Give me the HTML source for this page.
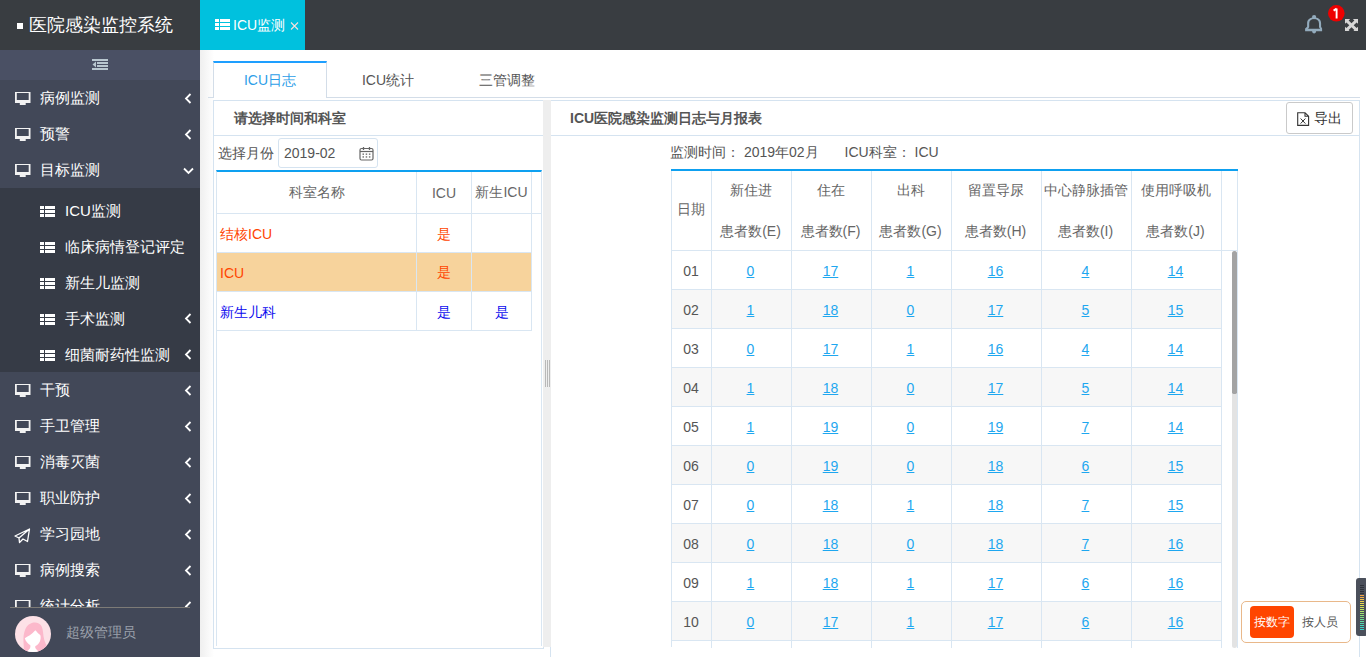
<!DOCTYPE html>
<html><head><meta charset="utf-8">
<style>
*{margin:0;padding:0;box-sizing:border-box}
html,body{width:1366px;height:657px;overflow:hidden;background:#fff;font-family:"Liberation Sans",sans-serif;font-size:14px;color:#555}
.abs{position:absolute}
#top{position:absolute;left:0;top:0;width:1366px;height:50px;background:#393d41}
#logo{position:absolute;left:17px;top:0;height:50px;line-height:50px;color:#fff;font-size:18px;white-space:nowrap}
#logo i{position:absolute;left:0;top:23px;width:6px;height:6px;background:#fff}
#logo span{position:absolute;left:12px;top:0}
#htab{position:absolute;left:200px;top:0;width:105px;height:50px;background:#00c1de;color:#fff;font-size:14px;line-height:50px;white-space:nowrap}
#side{position:absolute;left:0;top:50px;width:200px;height:607px;background:#424858;overflow:hidden}
#toggle{position:absolute;left:0;top:0;width:200px;height:30px;background:#4a5064}
.mi{position:absolute;left:0;width:200px;height:36px;line-height:36px;color:#fff;font-size:15px;white-space:nowrap}
.mi .t{position:absolute;left:40px;top:0}
.sub{position:absolute;left:0;width:200px;background:#363b46}
.si .t{left:65px;top:1px!important}
.chev{position:absolute;left:184px;top:0}
#user{position:absolute;left:0;top:557px;width:200px;height:50px;background:#424858}
#main{position:absolute;left:200px;top:50px;width:1166px;height:607px;background:#fff;overflow:hidden}
#shade{position:absolute;left:0;top:0;width:14px;height:607px;background:linear-gradient(to right,#efefef,#fff)}
.tabline{position:absolute;left:8px;top:47px;width:1152px;height:1px;background:#d3dde8}
.tab{position:absolute;top:11px;height:37px;line-height:38px;text-align:center;font-size:14px;color:#555;white-space:nowrap}
.tab.act{border:1px solid #d3dde8;border-top:2px solid #1e9fff;border-bottom:none;background:#fff;color:#2d9ee8;line-height:34px}
.panel{position:absolute;border:1px solid #d5e3f0;background:#fff}
.ph{position:absolute;left:0;top:0;right:0;height:35px;border-bottom:1px solid #d5e3f0;font-weight:bold;color:#555;line-height:34px;font-size:14px}
table{border-collapse:collapse;table-layout:fixed}
td,th{border:1px solid #d9e6f2;text-align:center;font-weight:normal;white-space:nowrap;overflow:hidden}
a{color:#1ea7f0;text-decoration:underline}
.hc{position:absolute;line-height:20px;text-align:center;font-size:14px;color:#666;white-space:nowrap}
.dc{position:absolute;height:38px;line-height:41px;text-align:center;font-size:14px;color:#555;z-index:2}
</style></head><body>
<div id="top">
  <div id="logo"><i></i><span>医院感染监控系统</span></div>
  <div id="htab"><svg width="15" height="11" viewBox="0 0 15 11" style="position:absolute;left:215px;top:19px;left:15px"><g fill="#fff"><rect x="0" y="0" width="4" height="3"/><rect x="5" y="0" width="10" height="3"/><rect x="0" y="4" width="4" height="3"/><rect x="5" y="4" width="10" height="3"/><rect x="0" y="8" width="4" height="3"/><rect x="5" y="8" width="10" height="3"/></g></svg><span style="position:absolute;left:33px;top:0">ICU监测</span><svg width="9" height="8" viewBox="0 0 9 8" style="position:absolute;left:90px;top:22px"><path d="M1 0.5L8 7.5M8 0.5L1 7.5" stroke="#f4e0dc" stroke-width="1.1"/></svg></div>
<svg width="24" height="24" viewBox="0 0 24 24" style="position:absolute;left:1302px;top:12px"><g fill="#93abbc"><path fill-rule="evenodd" d="M3.1 19.2 L3.1 16.6 L5.1 14.8 L5.1 11.5 C5.1 7.6 8 5.6 12.1 5.6 C16.2 5.6 19.1 7.6 19.1 11.5 L19.1 14.8 L20.1 16.6 L20.1 19.2 Z M7.2 15.2 L7.2 11.5 C7.2 8.9 9.2 7.1 12.1 7.1 C15 7.1 17 8.9 17 11.5 L17 15.2 L18.1 16.8 L6.1 16.8 Z"/><circle cx="12.1" cy="5.1" r="2.1"/><path d="M10.1 19 L14.1 19 C14.1 20.8 13.2 21.4 12.1 21.4 C11 21.4 10.1 20.8 10.1 19 Z"/></g></svg>
<svg width="17" height="17" viewBox="0 0 17 17" style="position:absolute;left:1327.7px;top:4.5px"><circle cx="8.3" cy="8.3" r="8.3" fill="#ee0000"/><path d="M8.6 3.4V13.4M8.6 3.6L5.6 5.6" stroke="#fff" stroke-width="1.9" fill="none"/></svg>
<svg width="13" height="12.5" viewBox="0 0 13 12.5" style="position:absolute;left:1344.6px;top:18.7px"><rect x="0" y="0" width="13" height="12.5" fill="#d6d6d6"/><path d="M5.1 0L3.65 1.4L6.5 4.2L9.35 1.4L7.9 0Z M5.1 12.5L3.65 11.1L6.5 8.3L9.35 11.1L7.9 12.5Z M0 4.8L1.4 3.4L4.3 6.25L1.4 9.1L0 7.7Z M13 4.8L11.6 3.4L8.7 6.25L11.6 9.1L13 7.7Z" fill="#393d41"/></svg>
</div>
<div id="side">
  <div id="toggle"><svg width="17" height="12" viewBox="0 0 17 12" style="position:absolute;left:92px;top:9px"><g fill="#b8c6cf"><rect x="0" y="0" width="16" height="2"/><rect x="5" y="3" width="11" height="2"/><rect x="5" y="6" width="11" height="2"/><rect x="0" y="9" width="16" height="2"/><path d="M0.5 5.5L4 2.5L4 8.5Z"/></g></svg></div>
<div class="mi" style="top:30px"><svg class="ic" width="16" height="14" viewBox="0 0 16 14" style="position:absolute;left:15px;top:12px"><path fill="#f2f2f2" fill-rule="evenodd" d="M0 0H15.5V11H0Z M1.8 1.1H13.7V7.9H1.8Z"/><rect x="4.8" y="11" width="5.9" height="2" fill="#f2f2f2"/></svg><span class="t">病例监测</span><svg width="8" height="11" viewBox="0 0 8 11" style="position:absolute;left:184px;top:13px"><path d="M6.5 1 L2 5.5 L6.5 10" fill="none" stroke="#fff" stroke-width="1.8"/></svg></div>
<div class="mi" style="top:66px"><svg class="ic" width="16" height="14" viewBox="0 0 16 14" style="position:absolute;left:15px;top:12px"><path fill="#f2f2f2" fill-rule="evenodd" d="M0 0H15.5V11H0Z M1.8 1.1H13.7V7.9H1.8Z"/><rect x="4.8" y="11" width="5.9" height="2" fill="#f2f2f2"/></svg><span class="t">预警</span><svg width="8" height="11" viewBox="0 0 8 11" style="position:absolute;left:184px;top:13px"><path d="M6.5 1 L2 5.5 L6.5 10" fill="none" stroke="#fff" stroke-width="1.8"/></svg></div>
<div class="mi" style="top:102px"><svg class="ic" width="16" height="14" viewBox="0 0 16 14" style="position:absolute;left:15px;top:12px"><path fill="#f2f2f2" fill-rule="evenodd" d="M0 0H15.5V11H0Z M1.8 1.1H13.7V7.9H1.8Z"/><rect x="4.8" y="11" width="5.9" height="2" fill="#f2f2f2"/></svg><span class="t">目标监测</span><svg width="12" height="8" viewBox="0 0 12 8" style="position:absolute;left:183px;top:15px"><path d="M1 1.5 L5.5 6 L10 1.5" fill="none" stroke="#fff" stroke-width="1.8"/></svg></div>
<div class="sub" style="top:138px;height:184px"><div class="mi si" style="top:4px"><svg width="15" height="12" viewBox="0 0 15 12" style="position:absolute;left:40px;top:14px"><g fill="#fff"><rect x="0" y="0" width="4" height="3"/><rect x="5" y="0" width="10" height="3"/><rect x="0" y="4" width="4" height="3"/><rect x="5" y="4" width="10" height="3"/><rect x="0" y="8" width="4" height="3"/><rect x="5" y="8" width="10" height="3"/></g></svg><span class="t">ICU监测</span></div><div class="mi si" style="top:40px"><svg width="15" height="12" viewBox="0 0 15 12" style="position:absolute;left:40px;top:14px"><g fill="#fff"><rect x="0" y="0" width="4" height="3"/><rect x="5" y="0" width="10" height="3"/><rect x="0" y="4" width="4" height="3"/><rect x="5" y="4" width="10" height="3"/><rect x="0" y="8" width="4" height="3"/><rect x="5" y="8" width="10" height="3"/></g></svg><span class="t">临床病情登记评定</span></div><div class="mi si" style="top:76px"><svg width="15" height="12" viewBox="0 0 15 12" style="position:absolute;left:40px;top:14px"><g fill="#fff"><rect x="0" y="0" width="4" height="3"/><rect x="5" y="0" width="10" height="3"/><rect x="0" y="4" width="4" height="3"/><rect x="5" y="4" width="10" height="3"/><rect x="0" y="8" width="4" height="3"/><rect x="5" y="8" width="10" height="3"/></g></svg><span class="t">新生儿监测</span></div><div class="mi si" style="top:112px"><svg width="15" height="12" viewBox="0 0 15 12" style="position:absolute;left:40px;top:14px"><g fill="#fff"><rect x="0" y="0" width="4" height="3"/><rect x="5" y="0" width="10" height="3"/><rect x="0" y="4" width="4" height="3"/><rect x="5" y="4" width="10" height="3"/><rect x="0" y="8" width="4" height="3"/><rect x="5" y="8" width="10" height="3"/></g></svg><span class="t">手术监测</span><svg width="8" height="11" viewBox="0 0 8 11" style="position:absolute;left:184px;top:13px"><path d="M6.5 1 L2 5.5 L6.5 10" fill="none" stroke="#fff" stroke-width="1.8"/></svg></div><div class="mi si" style="top:148px"><svg width="15" height="12" viewBox="0 0 15 12" style="position:absolute;left:40px;top:14px"><g fill="#fff"><rect x="0" y="0" width="4" height="3"/><rect x="5" y="0" width="10" height="3"/><rect x="0" y="4" width="4" height="3"/><rect x="5" y="4" width="10" height="3"/><rect x="0" y="8" width="4" height="3"/><rect x="5" y="8" width="10" height="3"/></g></svg><span class="t">细菌耐药性监测</span><svg width="8" height="11" viewBox="0 0 8 11" style="position:absolute;left:184px;top:13px"><path d="M6.5 1 L2 5.5 L6.5 10" fill="none" stroke="#fff" stroke-width="1.8"/></svg></div></div>
<div class="mi" style="top:322px"><svg class="ic" width="16" height="14" viewBox="0 0 16 14" style="position:absolute;left:15px;top:12px"><path fill="#f2f2f2" fill-rule="evenodd" d="M0 0H15.5V11H0Z M1.8 1.1H13.7V7.9H1.8Z"/><rect x="4.8" y="11" width="5.9" height="2" fill="#f2f2f2"/></svg><span class="t">干预</span><svg width="8" height="11" viewBox="0 0 8 11" style="position:absolute;left:184px;top:13px"><path d="M6.5 1 L2 5.5 L6.5 10" fill="none" stroke="#fff" stroke-width="1.8"/></svg></div>
<div class="mi" style="top:358px"><svg class="ic" width="16" height="14" viewBox="0 0 16 14" style="position:absolute;left:15px;top:12px"><path fill="#f2f2f2" fill-rule="evenodd" d="M0 0H15.5V11H0Z M1.8 1.1H13.7V7.9H1.8Z"/><rect x="4.8" y="11" width="5.9" height="2" fill="#f2f2f2"/></svg><span class="t">手卫管理</span><svg width="8" height="11" viewBox="0 0 8 11" style="position:absolute;left:184px;top:13px"><path d="M6.5 1 L2 5.5 L6.5 10" fill="none" stroke="#fff" stroke-width="1.8"/></svg></div>
<div class="mi" style="top:394px"><svg class="ic" width="16" height="14" viewBox="0 0 16 14" style="position:absolute;left:15px;top:12px"><path fill="#f2f2f2" fill-rule="evenodd" d="M0 0H15.5V11H0Z M1.8 1.1H13.7V7.9H1.8Z"/><rect x="4.8" y="11" width="5.9" height="2" fill="#f2f2f2"/></svg><span class="t">消毒灭菌</span><svg width="8" height="11" viewBox="0 0 8 11" style="position:absolute;left:184px;top:13px"><path d="M6.5 1 L2 5.5 L6.5 10" fill="none" stroke="#fff" stroke-width="1.8"/></svg></div>
<div class="mi" style="top:430px"><svg class="ic" width="16" height="14" viewBox="0 0 16 14" style="position:absolute;left:15px;top:12px"><path fill="#f2f2f2" fill-rule="evenodd" d="M0 0H15.5V11H0Z M1.8 1.1H13.7V7.9H1.8Z"/><rect x="4.8" y="11" width="5.9" height="2" fill="#f2f2f2"/></svg><span class="t">职业防护</span><svg width="8" height="11" viewBox="0 0 8 11" style="position:absolute;left:184px;top:13px"><path d="M6.5 1 L2 5.5 L6.5 10" fill="none" stroke="#fff" stroke-width="1.8"/></svg></div>
<div class="mi" style="top:466px"><svg width="17" height="16" viewBox="0 0 17 16" style="position:absolute;left:14px;top:12px"><path d="M1 8 L15.5 1 L13.5 13.5 L9 11 L5.5 14.5 L5 10 Z M5 10 L15.5 1" fill="none" stroke="#fff" stroke-width="1.3" stroke-linejoin="round"/></svg><span class="t">学习园地</span><svg width="8" height="11" viewBox="0 0 8 11" style="position:absolute;left:184px;top:13px"><path d="M6.5 1 L2 5.5 L6.5 10" fill="none" stroke="#fff" stroke-width="1.8"/></svg></div>
<div class="mi" style="top:502px"><svg class="ic" width="16" height="14" viewBox="0 0 16 14" style="position:absolute;left:15px;top:12px"><path fill="#f2f2f2" fill-rule="evenodd" d="M0 0H15.5V11H0Z M1.8 1.1H13.7V7.9H1.8Z"/><rect x="4.8" y="11" width="5.9" height="2" fill="#f2f2f2"/></svg><span class="t">病例搜索</span><svg width="8" height="11" viewBox="0 0 8 11" style="position:absolute;left:184px;top:13px"><path d="M6.5 1 L2 5.5 L6.5 10" fill="none" stroke="#fff" stroke-width="1.8"/></svg></div>
<div class="mi" style="top:538px"><svg class="ic" width="16" height="14" viewBox="0 0 16 14" style="position:absolute;left:15px;top:12px"><path fill="#f2f2f2" fill-rule="evenodd" d="M0 0H15.5V11H0Z M1.8 1.1H13.7V7.9H1.8Z"/><rect x="4.8" y="11" width="5.9" height="2" fill="#f2f2f2"/></svg><span class="t">统计分析</span><svg width="8" height="11" viewBox="0 0 8 11" style="position:absolute;left:184px;top:13px"><path d="M6.5 1 L2 5.5 L6.5 10" fill="none" stroke="#fff" stroke-width="1.8"/></svg></div>
<div id="user"><div style="position:absolute;left:10px;top:0;width:180px;height:1px;background:#7d7b77"></div>
<svg width="36" height="36" viewBox="0 0 36 36" style="position:absolute;left:15px;top:9px"><defs><clipPath id="cc"><circle cx="18" cy="18" r="18"/></clipPath></defs><g clip-path="url(#cc)"><rect width="36" height="36" fill="#fde1e7"/><path d="M9 36 C9 28 7.5 22 9.5 15.5 C11.5 9 15.5 6.5 20 6.5 C25 6.5 27.5 10 28 16 C28.5 22 29.5 27 33 31.5 L30 36 Z" fill="#fcb8cb"/><path d="M9.8 22.3 C12.5 20.5 17 18.5 20.3 14.3 L21.6 15.6 C22.5 17 24 18 25.5 19.5 C26.2 24 24.5 28 20.5 30 C19.5 31.5 21 34 25 36 L11 36 C14.5 34 16 31.5 15.3 29.3 C12.5 27.5 10.5 25 9.8 22.3 Z" fill="#fff"/></g></svg>
<span style="position:absolute;left:66px;top:0;line-height:50px;font-size:14px;color:#9aa0ab">超级管理员</span></div>
</div>
<div id="main">
  <div id="shade"></div>
<div class="tabline"></div>
<div class="tab act" style="left:13px;width:114px">ICU日志</div>
<div class="tab" style="left:131px;width:114px">ICU统计</div>
<div class="tab" style="left:250px;width:114px">三管调整</div>
<div class="panel" id="lp" style="left:13px;top:50px;width:331px;height:549px">
  <div class="ph" style="padding-left:20px">请选择时间和科室</div>
  <span style="position:absolute;left:4px;top:35px;line-height:34px;font-size:14px;color:#555">选择月份</span>
  <div style="position:absolute;left:64px;top:37px;width:100px;height:30px;border:1px solid #d5e3f0;border-radius:3px;line-height:28px;padding-left:5px;color:#555;font-size:14px">2019-02<span style="position:absolute;left:80px;top:7px;line-height:0"><svg width="15" height="15" viewBox="0 0 15 15"><rect x="1" y="2.5" width="13" height="11.5" rx="1.5" fill="none" stroke="#666" stroke-width="1.2"/><path d="M1 5.5H14" stroke="#666" stroke-width="1.2"/><path d="M4.5 1V4M10.5 1V4" stroke="#666" stroke-width="1.3"/><g fill="#666"><rect x="3.5" y="7.5" width="1.5" height="1.3"/><rect x="6.7" y="7.5" width="1.5" height="1.3"/><rect x="9.9" y="7.5" width="1.5" height="1.3"/><rect x="3.5" y="10.3" width="1.5" height="1.3"/><rect x="6.7" y="10.3" width="1.5" height="1.3"/><rect x="9.9" y="10.3" width="1.5" height="1.3"/></g></svg></span></div>
  <div id="ltw" style="position:absolute;left:2px;top:69px;width:326px;height:476px;border:1px solid #d9e6f2;border-top:2px solid #0ea0f0;border-bottom:none;overflow:hidden">
<table style="position:absolute;left:-1px;top:-1px;width:326px">
<colgroup><col style="width:200px"><col style="width:55px"><col style="width:60px"><col style="width:11px"></colgroup>
<tr style="height:42px"><td style="color:#666">科室名称</td><td style="color:#666">ICU</td><td style="color:#666">新生ICU</td><td style="border-right:none"></td></tr>
</table>
<table style="position:absolute;left:-1px;top:40px;width:316px">
<colgroup><col style="width:200px"><col style="width:55px"><col style="width:60px"></colgroup>
<tr style="height:40px;color:#ff4500"><td style="text-align:left;padding-left:3px;border-top:none;padding-top:6px">结核ICU</td><td style="border-top:none;padding-top:6px">是</td><td style="border-top:none"></td></tr>
<tr style="height:39px;color:#ff4500;background:#f7d39c"><td style="text-align:left;padding-left:3px;padding-top:3px">ICU</td><td style="padding-top:3px">是</td><td></td></tr>
<tr style="height:39px;color:#0a0aee"><td style="text-align:left;padding-left:3px;padding-top:5px">新生儿科</td><td style="padding-top:5px">是</td><td style="padding-top:5px">是</td></tr>
</table>
</div>
</div>
<div style="position:absolute;left:343px;top:50px;width:8px;height:547px;background:#eeeeee;z-index:5"><div style="position:absolute;left:2px;top:260px;width:1px;height:27px;background:#b8b8b8"></div><div style="position:absolute;left:4px;top:260px;width:1px;height:27px;background:#b8b8b8"></div><div style="position:absolute;left:6px;top:260px;width:1px;height:27px;background:#b8b8b8"></div></div>
<div class="panel" id="rp" style="left:350px;top:50px;width:810px;height:600px;border-bottom:none">
  <div class="ph" style="padding-left:19px">ICU医院感染监测日志与月报表</div><div style="position:absolute;left:735px;top:1px;width:67px;height:32px;border:1px solid #cacaca;border-radius:3px;font-size:14px;color:#333;line-height:30px"><span style="position:absolute;left:10px;top:9px;line-height:0"><svg width="13" height="15" viewBox="0 0 13 15"><path d="M0.7 0.7H8L11.6 4.3V13.4H0.7Z M8 0.7V4.3H11.6" fill="none" stroke="#333" stroke-width="1.1"/><path d="M3.6 6.5L8.4 11.6M8.4 6.5L3.6 11.6" stroke="#333" stroke-width="1"/></svg></span><span style="position:absolute;left:27px;top:0">导出</span></div><div style="position:absolute;left:119px;top:41px;line-height:20px;font-size:14px;color:#555;white-space:nowrap">监测时间：&nbsp;2019年02月<span style="margin-left:26px">ICU科室：&nbsp;ICU</span></div><div id="rtw" style="position:absolute;left:120px;top:68px;width:567px;height:479px;border-top:2px solid #0ea0f0;overflow:hidden"><div style="position:absolute;left:0;top:0;width:1px;height:476px;background:#d9e6f2"></div><div style="position:absolute;left:566px;top:0;width:1px;height:477px;background:#d9e6f2;z-index:3"></div><div style="position:absolute;left:0;top:79px;width:567px;height:1px;background:#d9e6f2"></div><div class="hc" style="left:0;width:40px;top:28px">日期</div><div class="hc" style="left:40px;width:79px;top:9px">新住进</div><div class="hc" style="left:40px;width:79px;top:50px">患者数(E)</div><div style="position:absolute;left:40px;top:0;width:1px;height:477px;background:#d9e6f2;z-index:3"></div><div class="hc" style="left:120px;width:79px;top:9px">住在</div><div class="hc" style="left:120px;width:79px;top:50px">患者数(F)</div><div style="position:absolute;left:120px;top:0;width:1px;height:477px;background:#d9e6f2;z-index:3"></div><div class="hc" style="left:200px;width:79px;top:9px">出科</div><div class="hc" style="left:200px;width:79px;top:50px">患者数(G)</div><div style="position:absolute;left:200px;top:0;width:1px;height:477px;background:#d9e6f2;z-index:3"></div><div class="hc" style="left:280px;width:89px;top:9px">留置导尿</div><div class="hc" style="left:280px;width:89px;top:50px">患者数(H)</div><div style="position:absolute;left:280px;top:0;width:1px;height:477px;background:#d9e6f2;z-index:3"></div><div class="hc" style="left:370px;width:89px;top:9px">中心静脉插管</div><div class="hc" style="left:370px;width:89px;top:50px">患者数(I)</div><div style="position:absolute;left:370px;top:0;width:1px;height:477px;background:#d9e6f2;z-index:3"></div><div class="hc" style="left:460px;width:89px;top:9px">使用呼吸机</div><div class="hc" style="left:460px;width:89px;top:50px">患者数(J)</div><div style="position:absolute;left:460px;top:0;width:1px;height:477px;background:#d9e6f2;z-index:3"></div><div style="position:absolute;left:550px;top:0;width:1px;height:477px;background:#d9e6f2;z-index:3"></div><div style="position:absolute;left:1px;top:80px;width:550px;height:38px;background:#fff"></div><div style="position:absolute;left:0;top:118px;width:551px;height:1px;background:#d9e6f2"></div><div class="dc" style="left:0;width:40px;top:80px">01</div><div class="dc" style="left:40px;width:79px;top:80px"><a>0</a></div><div class="dc" style="left:120px;width:79px;top:80px"><a>17</a></div><div class="dc" style="left:200px;width:79px;top:80px"><a>1</a></div><div class="dc" style="left:280px;width:89px;top:80px"><a>16</a></div><div class="dc" style="left:370px;width:89px;top:80px"><a>4</a></div><div class="dc" style="left:460px;width:89px;top:80px"><a>14</a></div><div style="position:absolute;left:1px;top:119px;width:550px;height:38px;background:#f7f7f7"></div><div style="position:absolute;left:0;top:157px;width:551px;height:1px;background:#d9e6f2"></div><div class="dc" style="left:0;width:40px;top:119px">02</div><div class="dc" style="left:40px;width:79px;top:119px"><a>1</a></div><div class="dc" style="left:120px;width:79px;top:119px"><a>18</a></div><div class="dc" style="left:200px;width:79px;top:119px"><a>0</a></div><div class="dc" style="left:280px;width:89px;top:119px"><a>17</a></div><div class="dc" style="left:370px;width:89px;top:119px"><a>5</a></div><div class="dc" style="left:460px;width:89px;top:119px"><a>15</a></div><div style="position:absolute;left:1px;top:158px;width:550px;height:38px;background:#fff"></div><div style="position:absolute;left:0;top:196px;width:551px;height:1px;background:#d9e6f2"></div><div class="dc" style="left:0;width:40px;top:158px">03</div><div class="dc" style="left:40px;width:79px;top:158px"><a>0</a></div><div class="dc" style="left:120px;width:79px;top:158px"><a>17</a></div><div class="dc" style="left:200px;width:79px;top:158px"><a>1</a></div><div class="dc" style="left:280px;width:89px;top:158px"><a>16</a></div><div class="dc" style="left:370px;width:89px;top:158px"><a>4</a></div><div class="dc" style="left:460px;width:89px;top:158px"><a>14</a></div><div style="position:absolute;left:1px;top:197px;width:550px;height:38px;background:#f7f7f7"></div><div style="position:absolute;left:0;top:235px;width:551px;height:1px;background:#d9e6f2"></div><div class="dc" style="left:0;width:40px;top:197px">04</div><div class="dc" style="left:40px;width:79px;top:197px"><a>1</a></div><div class="dc" style="left:120px;width:79px;top:197px"><a>18</a></div><div class="dc" style="left:200px;width:79px;top:197px"><a>0</a></div><div class="dc" style="left:280px;width:89px;top:197px"><a>17</a></div><div class="dc" style="left:370px;width:89px;top:197px"><a>5</a></div><div class="dc" style="left:460px;width:89px;top:197px"><a>14</a></div><div style="position:absolute;left:1px;top:236px;width:550px;height:38px;background:#fff"></div><div style="position:absolute;left:0;top:274px;width:551px;height:1px;background:#d9e6f2"></div><div class="dc" style="left:0;width:40px;top:236px">05</div><div class="dc" style="left:40px;width:79px;top:236px"><a>1</a></div><div class="dc" style="left:120px;width:79px;top:236px"><a>19</a></div><div class="dc" style="left:200px;width:79px;top:236px"><a>0</a></div><div class="dc" style="left:280px;width:89px;top:236px"><a>19</a></div><div class="dc" style="left:370px;width:89px;top:236px"><a>7</a></div><div class="dc" style="left:460px;width:89px;top:236px"><a>14</a></div><div style="position:absolute;left:1px;top:275px;width:550px;height:38px;background:#f7f7f7"></div><div style="position:absolute;left:0;top:313px;width:551px;height:1px;background:#d9e6f2"></div><div class="dc" style="left:0;width:40px;top:275px">06</div><div class="dc" style="left:40px;width:79px;top:275px"><a>0</a></div><div class="dc" style="left:120px;width:79px;top:275px"><a>19</a></div><div class="dc" style="left:200px;width:79px;top:275px"><a>0</a></div><div class="dc" style="left:280px;width:89px;top:275px"><a>18</a></div><div class="dc" style="left:370px;width:89px;top:275px"><a>6</a></div><div class="dc" style="left:460px;width:89px;top:275px"><a>15</a></div><div style="position:absolute;left:1px;top:314px;width:550px;height:38px;background:#fff"></div><div style="position:absolute;left:0;top:352px;width:551px;height:1px;background:#d9e6f2"></div><div class="dc" style="left:0;width:40px;top:314px">07</div><div class="dc" style="left:40px;width:79px;top:314px"><a>0</a></div><div class="dc" style="left:120px;width:79px;top:314px"><a>18</a></div><div class="dc" style="left:200px;width:79px;top:314px"><a>1</a></div><div class="dc" style="left:280px;width:89px;top:314px"><a>18</a></div><div class="dc" style="left:370px;width:89px;top:314px"><a>7</a></div><div class="dc" style="left:460px;width:89px;top:314px"><a>15</a></div><div style="position:absolute;left:1px;top:353px;width:550px;height:38px;background:#f7f7f7"></div><div style="position:absolute;left:0;top:391px;width:551px;height:1px;background:#d9e6f2"></div><div class="dc" style="left:0;width:40px;top:353px">08</div><div class="dc" style="left:40px;width:79px;top:353px"><a>0</a></div><div class="dc" style="left:120px;width:79px;top:353px"><a>18</a></div><div class="dc" style="left:200px;width:79px;top:353px"><a>0</a></div><div class="dc" style="left:280px;width:89px;top:353px"><a>18</a></div><div class="dc" style="left:370px;width:89px;top:353px"><a>7</a></div><div class="dc" style="left:460px;width:89px;top:353px"><a>16</a></div><div style="position:absolute;left:1px;top:392px;width:550px;height:38px;background:#fff"></div><div style="position:absolute;left:0;top:430px;width:551px;height:1px;background:#d9e6f2"></div><div class="dc" style="left:0;width:40px;top:392px">09</div><div class="dc" style="left:40px;width:79px;top:392px"><a>1</a></div><div class="dc" style="left:120px;width:79px;top:392px"><a>18</a></div><div class="dc" style="left:200px;width:79px;top:392px"><a>1</a></div><div class="dc" style="left:280px;width:89px;top:392px"><a>17</a></div><div class="dc" style="left:370px;width:89px;top:392px"><a>6</a></div><div class="dc" style="left:460px;width:89px;top:392px"><a>16</a></div><div style="position:absolute;left:1px;top:431px;width:550px;height:38px;background:#f7f7f7"></div><div style="position:absolute;left:0;top:469px;width:551px;height:1px;background:#d9e6f2"></div><div class="dc" style="left:0;width:40px;top:431px">10</div><div class="dc" style="left:40px;width:79px;top:431px"><a>0</a></div><div class="dc" style="left:120px;width:79px;top:431px"><a>17</a></div><div class="dc" style="left:200px;width:79px;top:431px"><a>1</a></div><div class="dc" style="left:280px;width:89px;top:431px"><a>17</a></div><div class="dc" style="left:370px;width:89px;top:431px"><a>6</a></div><div class="dc" style="left:460px;width:89px;top:431px"><a>16</a></div><div style="position:absolute;left:561px;top:80px;width:5px;height:397px;background:#e3e3e3;border-radius:3px"></div><div style="position:absolute;left:561px;top:80px;width:5px;height:143px;background:#a3a3a3;border-radius:3px 3px 2px 2px"></div></div>
</div>

</div>
<div style="position:absolute;left:1241px;top:601px;width:110px;height:42px;border:1px solid #e9b88a;border-radius:5px;background:#fff;z-index:10">
<div style="position:absolute;left:8px;top:4px;width:44px;height:32px;background:#ff4500;border-radius:4px;color:#fff;font-size:12px;line-height:32px;text-align:center">按数字</div>
<span style="position:absolute;left:60px;top:0;line-height:40px;font-size:12px;color:#555">按人员</span></div>
<div style="position:absolute;left:1356px;top:578px;width:12px;height:58px;background:#4b505b;border-radius:3px;z-index:10"><div style="position:absolute;left:4px;top:7px;width:4px;height:1px;background:#2e3239"></div><div style="position:absolute;left:4px;top:9px;width:4px;height:1px;background:#2e3239"></div><div style="position:absolute;left:4px;top:11px;width:4px;height:1px;background:#2e3239"></div><div style="position:absolute;left:4px;top:13px;width:4px;height:1px;background:#2e3239"></div><div style="position:absolute;left:4px;top:15px;width:4px;height:1px;background:#2e3239"></div><div style="position:absolute;left:4px;top:17px;width:4px;height:1px;background:#f2a444"></div><div style="position:absolute;left:4px;top:19px;width:4px;height:1px;background:#f4b048"></div><div style="position:absolute;left:4px;top:21px;width:4px;height:1px;background:#f2c04a"></div><div style="position:absolute;left:4px;top:23px;width:4px;height:1px;background:#edd14c"></div><div style="position:absolute;left:4px;top:25px;width:4px;height:1px;background:#e6da4f"></div><div style="position:absolute;left:4px;top:27px;width:4px;height:1px;background:#dde052"></div><div style="position:absolute;left:4px;top:29px;width:4px;height:1px;background:#cfe259"></div><div style="position:absolute;left:4px;top:31px;width:4px;height:1px;background:#c0e45f"></div><div style="position:absolute;left:4px;top:33px;width:4px;height:1px;background:#b0e467"></div><div style="position:absolute;left:4px;top:35px;width:4px;height:1px;background:#9fe370"></div><div style="position:absolute;left:4px;top:37px;width:4px;height:1px;background:#8ee17a"></div><div style="position:absolute;left:4px;top:39px;width:4px;height:1px;background:#7edf85"></div><div style="position:absolute;left:4px;top:41px;width:4px;height:1px;background:#6fdd92"></div><div style="position:absolute;left:4px;top:43px;width:4px;height:1px;background:#60dba0"></div><div style="position:absolute;left:4px;top:45px;width:4px;height:1px;background:#52d9ad"></div><div style="position:absolute;left:4px;top:47px;width:4px;height:1px;background:#46d8ba"></div><div style="position:absolute;left:4px;top:49px;width:4px;height:1px;background:#3cd6c4"></div><div style="position:absolute;left:4px;top:51px;width:4px;height:1px;background:#36d5cb"></div></div>
</body></html>
